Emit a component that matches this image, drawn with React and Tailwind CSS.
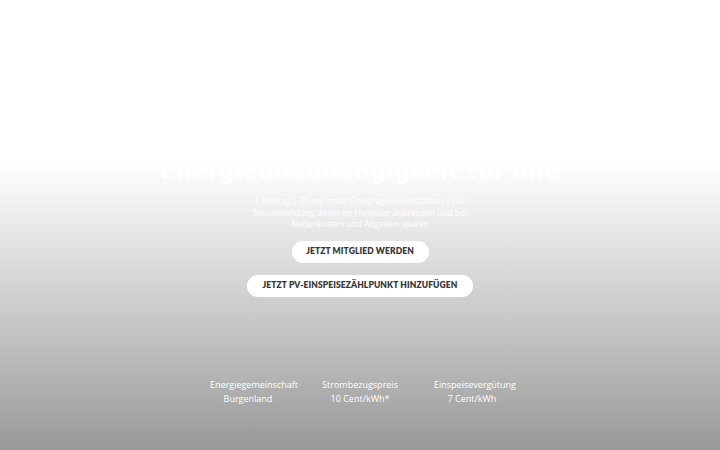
import React from "react";

export default function App() {
  return (
    <div className="w-full h-[450px] overflow-hidden bg-[linear-gradient(to_bottom,#ffffff_0px,#ffffff_163px,#999999_450px)] flex flex-col items-center font-['DejaVu_Sans',sans-serif] text-white">
      <h1 className="mt-[155px] text-[22.5px] leading-[32px] font-bold tracking-[0.2px] text-white whitespace-nowrap">
        Energieunabhängigkeit für alle
      </h1>
      <p className="mt-[8px] text-center text-[8.5px] leading-[11.5px] text-white font-['Open_Sans',sans-serif] whitespace-nowrap">
        1 Beitrag | 28 regionale Energiegemeinschaften | Die
        <br />
        Neuanmeldung direkt im Formular ankreuzen und bei
        <br />
        Nebenkosten und Abgaben sparen
      </p>
      <div className="mt-[11px] flex flex-col items-center gap-[12px] font-['Lato',sans-serif]">
        <button className="h-[22px] w-[137px] rounded-full bg-white text-[8.5px] font-extrabold text-[#3a3a3a] tracking-[0.1px] uppercase">
          Jetzt Mitglied werden
        </button>
        <button className="h-[22px] w-[226px] rounded-full bg-white text-[8.5px] font-extrabold text-[#3a3a3a] tracking-[0.1px]">
          JETZT PV-EINSPEISEZÄHLPUNKT HINZUFÜGEN
        </button>
      </div>
      <div className="mt-[81px] ml-[18px] flex items-start text-[9px] leading-[14px] text-white font-['Open_Sans',sans-serif]">
        <div className="w-[100px] flex flex-col items-center">
          <span>Energiegemeinschaft</span>
          <span className="pr-[12px]">Burgenland</span>
        </div>
        <div className="w-[112px] flex flex-col items-center">
          <span>Strombezugspreis</span>
          <span>10 Cent/kWh*</span>
        </div>
        <div className="w-[118px] flex flex-col items-center">
          <span>Einspeisevergütung</span>
          <span className="pr-[6px]">7 Cent/kWh</span>
        </div>
      </div>
    </div>
  );
}
